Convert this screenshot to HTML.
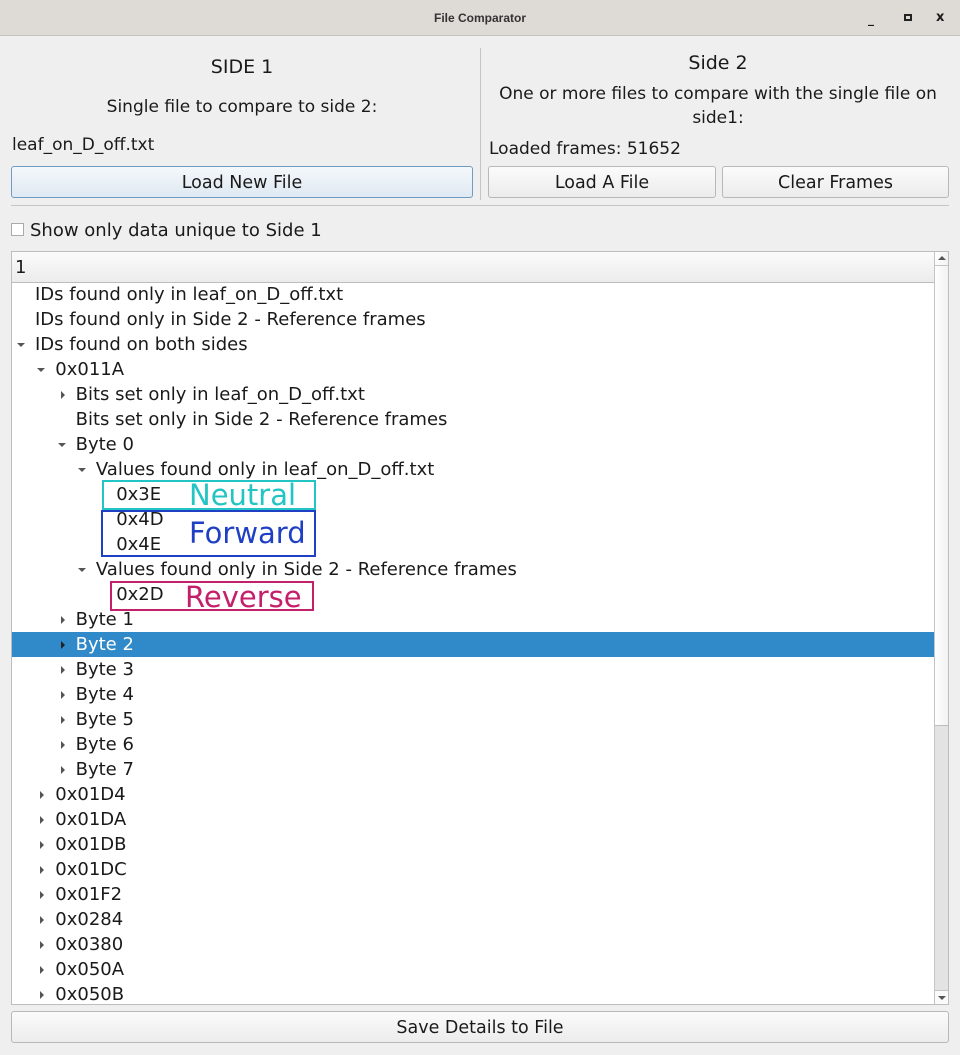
<!DOCTYPE html>
<html><head><meta charset="utf-8"><style>
*{margin:0;padding:0;box-sizing:border-box}
body{width:960px;height:1055px;background:#efefef;font-family:"DejaVu Sans","Liberation Sans",sans-serif;font-size:18px;color:#1a1a1a;position:relative;overflow:hidden}
.a{position:absolute;white-space:nowrap;line-height:20px}
.t{font-size:17px}
.title{position:absolute;left:0;top:0;width:960px;height:36px;background:#dedad6;border-bottom:1px solid #c8c4c0}
.btn{position:absolute;height:32px;border:1px solid #b8b8b8;border-radius:3px;background:linear-gradient(#fbfbfb,#ececec);text-align:center;line-height:33px;font-size:17.5px}
.tree{position:absolute;left:11px;top:251px;width:938px;height:754px;background:#fff;border:1px solid #bdbdbd;overflow:hidden}
.row{position:absolute;height:25px;line-height:26px;white-space:nowrap}
.ar{position:absolute;width:0;height:0}
.r{border-top:4px solid transparent;border-bottom:4px solid transparent;border-left:4px solid #555}
.d{border-left:4px solid transparent;border-right:4px solid transparent;border-top:4px solid #555}
</style></head><body>
<div class="title"></div>
<div class="a" style="left:0;width:960px;text-align:center;top:8px;font-size:12px;font-family:'Liberation Sans',sans-serif;font-weight:bold;color:#333">File Comparator</div>
<div class="a" style="left:868px;top:9px;font-size:12px;font-weight:bold">_</div>
<div style="position:absolute;left:904px;top:14px;width:8px;height:7px;border:2px solid #222"></div>
<div class="a" style="left:936px;top:8px;font-size:13px;font-weight:bold">x</div>

<div class="a" style="left:0;width:484px;text-align:center;top:57px;font-size:19px">SIDE 1</div>
<div class="a t" style="left:0;width:484px;text-align:center;top:97px">Single file to compare to side 2:</div>
<div class="a t" style="left:12px;top:135px">leaf_on_D_off.txt</div>
<div class="btn" style="left:11px;top:166px;width:462px;border-color:#6f9ac4;background:linear-gradient(#f4f8fb,#dfe9f2)">Load New File</div>
<div style="position:absolute;left:480px;top:48px;width:1px;height:152px;background:#c4c4c4"></div>
<div class="a" style="left:486px;width:464px;text-align:center;top:53px;font-size:19px">Side 2</div>
<div class="a t" style="left:484px;width:468px;text-align:center;top:82px;line-height:24px;white-space:normal">One or more files to compare with the single file on side1:</div>
<div class="a t" style="left:489px;top:139px">Loaded frames: 51652</div>
<div class="btn" style="left:488px;top:166px;width:228px">Load A File</div>
<div class="btn" style="left:722px;top:166px;width:227px">Clear Frames</div>
<div style="position:absolute;left:11px;top:205px;width:938px;height:1px;background:#c4c4c4"></div>
<div style="position:absolute;left:11px;top:223px;width:13px;height:13px;border:1px solid #aaa;background:#fff"></div>
<div class="a" style="left:30px;top:221px">Show only data unique to Side 1</div>

<div class="tree">
<div style="position:absolute;left:0;top:0;width:922px;height:31px;background:linear-gradient(#fbfbfb,#ececec);border-bottom:1px solid #bdbdbd"></div>
<div class="row" style="left:3px;top:3px">1</div>
<div style="position:absolute;left:922px;top:0;width:15px;height:752px;background:#e3e3e3;border-left:1px solid #c4c4c4"></div>
<div style="position:absolute;left:923px;top:0;width:14px;height:474px;background:linear-gradient(90deg,#fff,#f0f0f0);border-bottom:1px solid #bdbdbd"></div>
<div style="position:absolute;left:923px;top:13px;width:14px;height:1px;background:#c4c4c4"></div>
<div class="ar" style="left:926px;top:4px;border-left:4px solid transparent;border-right:4px solid transparent;border-bottom:4px solid #555"></div>
<div style="position:absolute;left:923px;top:738px;width:14px;height:14px;background:#fafafa;border-top:1px solid #c4c4c4"></div>
<div class="ar d" style="left:926px;top:744px"></div>
<div style="position:absolute;left:0;top:380px;width:922px;height:25px;background:#3089c8"></div>
</div>
<div id="rows"></div>
<script>
var R=[[0,'IDs found only in leaf_on_D_off.txt',''],[0,'IDs found only in Side 2 - Reference frames',''],[0,'IDs found on both sides','d'],[1,'0x011A','d'],[2,'Bits set only in leaf_on_D_off.txt','r'],[2,'Bits set only in Side 2 - Reference frames',''],[2,'Byte 0','d'],[3,'Values found only in leaf_on_D_off.txt','d'],[4,'0x3E',''],[4,'0x4D',''],[4,'0x4E',''],[3,'Values found only in Side 2 - Reference frames','d'],[4,'0x2D',''],[2,'Byte 1','r'],[2,'Byte 2','r'],[2,'Byte 3','r'],[2,'Byte 4','r'],[2,'Byte 5','r'],[2,'Byte 6','r'],[2,'Byte 7','r'],[1,'0x01D4','r'],[1,'0x01DA','r'],[1,'0x01DB','r'],[1,'0x01DC','r'],[1,'0x01F2','r'],[1,'0x0284','r'],[1,'0x0380','r'],[1,'0x050A','r'],[1,'0x050B','r']];
var h='';R.forEach(function(e,i){var y=282+i*25,x=35+e[0]*20.3;var c=i==14?'color:#fff':'';
if(e[2])h+='<div class="ar '+e[2]+'" style="left:'+(x-(e[2]=='d'?18:15))+'px;top:'+(y+(e[2]=='d'?11:9))+'px;'+(i==14?'border-left-color:#222':'')+'"></div>';
h+='<div class="row" style="left:'+x+'px;top:'+y+'px;'+c+'">'+e[1]+'</div>';});
document.getElementById('rows').innerHTML=h;
</script>
<div style="position:absolute;left:102px;top:480px;width:214px;height:30px;border:2px solid #22c4c4"></div>
<div class="a" style="left:189px;top:480px;font-size:29px;line-height:30px;color:#22c4c4">Neutral</div>
<div style="position:absolute;left:101px;top:510px;width:215px;height:47px;border:2px solid #1f3fc4"></div>
<div class="a" style="left:189px;top:518px;font-size:29px;line-height:30px;color:#1f3fc4">Forward</div>
<div style="position:absolute;left:110px;top:581px;width:204px;height:30px;border:2px solid #c41f6a"></div>
<div class="a" style="left:185px;top:582px;font-size:29px;line-height:30px;color:#c41f6a">Reverse</div>

<div class="btn" style="left:11px;top:1011px;width:938px">Save Details to File</div>
</body></html>
